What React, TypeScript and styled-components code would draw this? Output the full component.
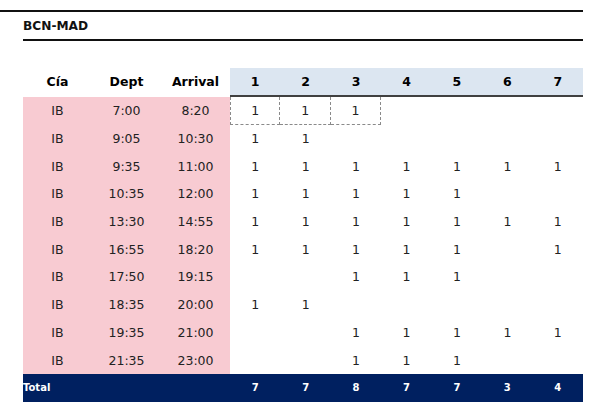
import React from 'react'
import styled, { createGlobalStyle } from 'styled-components'

const GlobalStyle = createGlobalStyle`
  html, body {
    margin: 0;
    padding: 0;
    background: #ffffff;
  }
  body {
    font-family: "DejaVu Sans", Verdana, sans-serif;
  }
`

type Flight = { cia: string; dept: string; arrival: string; days: number[] }

const flights: Flight[] = [
  { cia: 'IB', dept: '7:00', arrival: '8:20', days: [1, 2, 3] },
  { cia: 'IB', dept: '9:05', arrival: '10:30', days: [1, 2] },
  { cia: 'IB', dept: '9:35', arrival: '11:00', days: [1, 2, 3, 4, 5, 6, 7] },
  { cia: 'IB', dept: '10:35', arrival: '12:00', days: [1, 2, 3, 4, 5] },
  { cia: 'IB', dept: '13:30', arrival: '14:55', days: [1, 2, 3, 4, 5, 6, 7] },
  { cia: 'IB', dept: '16:55', arrival: '18:20', days: [1, 2, 3, 4, 5, 7] },
  { cia: 'IB', dept: '17:50', arrival: '19:15', days: [3, 4, 5] },
  { cia: 'IB', dept: '18:35', arrival: '20:00', days: [1, 2] },
  { cia: 'IB', dept: '19:35', arrival: '21:00', days: [3, 4, 5, 6, 7] },
  { cia: 'IB', dept: '21:35', arrival: '23:00', days: [3, 4, 5] },
]

const weekDays = [1, 2, 3, 4, 5, 6, 7]

const Page = styled.div`
  width: 583px;
  padding-top: 10px;
`

const TopRule = styled.div`
  border-top: 2px solid #111;
`

const TitleBar = styled.div`
  margin-left: 23px;
  height: 27px;
  display: flex;
  align-items: center;
  border-bottom: 2px solid #111;
`

const Title = styled.h1`
  margin: 0;
  font-size: 12.2px;
  font-weight: bold;
  color: #111;
`

const Grid = styled.div`
  margin: 27px 0 0 23px;
  display: grid;
  grid-template-columns: 69px 69px 69px repeat(7, 1fr);
`

const HeadCell = styled.div<{ $day?: boolean }>`
  height: 27px;
  display: flex;
  align-items: center;
  justify-content: center;
  font-size: 12.5px;
  font-weight: bold;
  color: #000;
  background: ${(p) => (p.$day ? '#dce6f1' : '#ffffff')};
  border-bottom: 2px solid ${(p) => (p.$day ? '#404040' : 'transparent')};
`

const InfoCell = styled.div`
  height: 27.7px;
  display: flex;
  align-items: center;
  justify-content: center;
  background: #f8cbd2;
  font-size: 12.5px;
  color: #222;
`

const DayCell = styled.div<{ $boxed?: boolean; $first?: boolean }>`
  box-sizing: border-box;
  height: 27.7px;
  display: flex;
  align-items: center;
  justify-content: center;
  font-size: 12.5px;
  color: #222;
  ${(p) =>
    p.$boxed &&
    `border-right: 1px dashed #8a8a8a;
     border-bottom: 1px dashed #8a8a8a;
     ${p.$first ? 'border-left: 1px dashed #8a8a8a;' : ''}`}
`

const TotalCell = styled.div<{ $label?: boolean }>`
  height: 28px;
  display: flex;
  align-items: center;
  justify-content: ${(p) => (p.$label ? 'flex-start' : 'center')};
  background: #002060;
  color: #ffffff;
  font-size: 10px;
  font-weight: bold;
`

function App() {
  const totals = weekDays.map((d) => flights.filter((f) => f.days.includes(d)).length)

  return (
    <>
      <GlobalStyle />
      <Page>
        <TopRule />
        <TitleBar>
          <Title>BCN-MAD</Title>
        </TitleBar>
        <Grid>
          <HeadCell>Cía</HeadCell>
          <HeadCell>Dept</HeadCell>
          <HeadCell>Arrival</HeadCell>
          {weekDays.map((d) => (
            <HeadCell key={d} $day>
              {d}
            </HeadCell>
          ))}

          {flights.map((f, i) => (
            <React.Fragment key={f.dept}>
              <InfoCell>{f.cia}</InfoCell>
              <InfoCell>{f.dept}</InfoCell>
              <InfoCell>{f.arrival}</InfoCell>
              {weekDays.map((d) => (
                <DayCell key={d} $boxed={i === 0 && d <= 3} $first={d === 1}>
                  {f.days.includes(d) ? 1 : ''}
                </DayCell>
              ))}
            </React.Fragment>
          ))}

          <TotalCell $label>Total</TotalCell>
          <TotalCell />
          <TotalCell />
          {totals.map((t, i) => (
            <TotalCell key={i}>{t}</TotalCell>
          ))}
        </Grid>
      </Page>
    </>
  )
}

export default App
